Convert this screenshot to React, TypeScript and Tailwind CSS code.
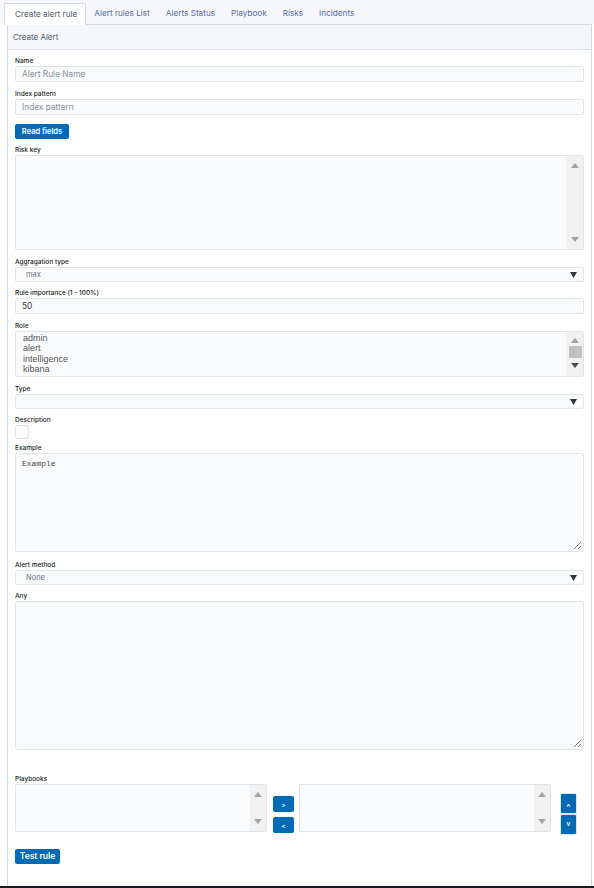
import type { ReactNode } from "react";

const tabs = ["Create alert rule", "Alert rules List", "Alerts Status", "Playbook", "Risks", "Incidents"];
const roles = ["admin", "alert", "intelligence", "kibana"];

const box = "rounded-[2px] border border-[#e1e4e9] bg-[#fafbfd]";

function Field({ label, className = "", children }: { label: string; className?: string; children: ReactNode }) {
  return (
    <div className={className}>
      <div className="h-[10px] text-[6.5px] font-medium leading-[10px] text-[#1a1c21]">{label}</div>
      {children}
    </div>
  );
}

function Arrow({ up, color }: { up?: boolean; color: string }) {
  return (
    <svg width="8" height="5" viewBox="0 0 8 5">
      <path d={up ? "M0 5 L4 0 L8 5 Z" : "M0 0 L8 0 L4 5 Z"} fill={color} />
    </svg>
  );
}

function Scrollbar() {
  return (
    <div className="flex w-[16px] shrink-0 flex-col items-center justify-between bg-[#f1f1f1] py-[7px]">
      <Arrow up color="#a3a3a3" />
      <Arrow color="#a3a3a3" />
    </div>
  );
}

function Select({ value }: { value?: string }) {
  return (
    <div className={`${box} flex h-[15px] items-center justify-between pl-[10px] pr-[6px]`}>
      <span className="text-[7.5px] text-[#69707d]">{value}</span>
      <svg width="7" height="6" viewBox="0 0 7 6">
        <path d="M0 0 H7 L3.5 6 Z" fill="#343741" />
      </svg>
    </div>
  );
}

function TextArea({ h, children }: { h: string; children?: ReactNode }) {
  return (
    <div className={`${box} relative ${h} px-[6px] py-[4px]`}>
      {children}
      <svg className="absolute bottom-[1px] right-[1px]" width="9" height="9" viewBox="0 0 9 9">
        <path d="M1 8 L8 1 M5 8 L8 5" stroke="#555" strokeWidth="0.8" />
      </svg>
    </div>
  );
}

function Input({ placeholder, value }: { placeholder?: string; value?: string }) {
  return (
    <input
      readOnly
      placeholder={placeholder}
      value={value ?? ""}
      className={`${box} block h-[16px] w-full px-[6px] text-[8.3px] text-[#343741] outline-none placeholder:text-[#8c919b]`}
    />
  );
}

function BlueButton({ children, className = "" }: { children: ReactNode; className?: string }) {
  return (
    <button className={`flex items-center justify-center rounded-[2px] bg-[#006bb4] font-semibold text-white ${className}`}>
      {children}
    </button>
  );
}

export default function App() {
  return (
    <div className="flex h-[888px] w-[594px] flex-col bg-white font-['Inter',sans-serif]">
      {/* tab strip */}
      <div className="flex h-[24px] shrink-0 items-end bg-[#f5f7fa] pl-[4px]">
        {tabs.map((t, i) =>
          i === 0 ? (
            <div
              key={t}
              className="relative z-10 -mb-px flex h-[22px] items-center border border-b-0 border-[#d3dae6] bg-white pl-[10px] pr-[8px] text-[8.2px] text-[#535966]"
            >
              {t}
            </div>
          ) : (
            <div key={t} className="flex h-[21px] items-center px-[8px] text-[8.2px] text-[#5b6c9d]">
              {t}
            </div>
          ),
        )}
      </div>

      <div className="ml-[7px] flex w-[585px] flex-1 flex-col border-x border-t border-[#d3dae6]">
        <div className="flex h-[25px] items-center border-b border-[#d3dae6] bg-[#f5f7fa] pl-[5px] text-[8px] text-[#535966]">
          Create Alert
        </div>

        <div className="flex flex-col px-[7px] pt-[6px]">
          <Field label="Name">
            <Input placeholder="Alert Rule Name" />
          </Field>
          <Field label="Index pattern" className="mt-[7px]">
            <Input placeholder="Index pattern" />
          </Field>
          <div className="mt-[9px]">
            <BlueButton className="h-[15px] w-[54px] text-[7.5px]">Read fields</BlueButton>
          </div>

          <Field label="Risk key" className="mt-[6px]">
            <div className={`${box} flex h-[95px] justify-end`}>
              <Scrollbar />
            </div>
          </Field>

          <Field label="Aggragation type" className="mt-[7px]">
            <Select value="max" />
          </Field>
          <Field label="Rule importance (1 - 100%)" className="mt-[6px]">
            <Input value="50" />
          </Field>

          <Field label="Role" className="mt-[7px]">
            <div className={`${box} flex h-[46px]`}>
              <div className="flex-1 pl-[7px] pt-[1px] font-['Liberation_Sans',sans-serif] text-[9px] leading-[10.4px] text-[#555]">
                {roles.map((r) => (
                  <div key={r}>{r}</div>
                ))}
              </div>
              <div className="flex w-[16px] flex-col items-center bg-[#f1f1f1] pt-[6px]">
                <Arrow up color="#a3a3a3" />
                <div className="mt-[3px] h-[12px] w-[13px] bg-[#c1c1c1]" />
                <div className="mt-[5px]">
                  <Arrow color="#505050" />
                </div>
              </div>
            </div>
          </Field>

          <Field label="Type" className="mt-[7px]">
            <Select />
          </Field>
          <Field label="Description" className="mt-[6px]">
            <div className={`${box} h-[14px] w-[14px]`} />
          </Field>
          <Field label="Example" className="mt-[4px]">
            <TextArea h="h-[99px]">
              <div className="font-['Liberation_Mono',monospace] text-[8px] text-[#444]">Example</div>
            </TextArea>
          </Field>

          <Field label="Alert method" className="mt-[8px]">
            <Select value="None" />
          </Field>
          <Field label="Any" className="mt-[6px]">
            <TextArea h="h-[149px]" />
          </Field>

          <Field label="Playbooks" className="mt-[24px]">
            <div className="flex items-start">
              <div className={`${box} flex h-[48px] w-[252px] justify-end`}>
                <Scrollbar />
              </div>
              <div className="ml-[6px] mt-[12px] flex flex-col gap-[5px]">
                <BlueButton className="h-[16px] w-[21px] text-[6px]">&gt;</BlueButton>
                <BlueButton className="h-[16px] w-[21px] text-[6px]">&lt;</BlueButton>
              </div>
              <div className={`${box} ml-[5px] flex h-[48px] w-[252px] justify-end`}>
                <Scrollbar />
              </div>
              <div className="ml-[9px] mt-[9px] flex flex-col">
                <BlueButton className="h-[21px] w-[17px] border border-[#d6e6f5] pt-[5px] text-[9px] leading-none">^</BlueButton>
                <BlueButton className="h-[21px] w-[17px] border border-[#d6e6f5] text-[6.5px]">v</BlueButton>
              </div>
            </div>
          </Field>

          <div className="mt-[14px]">
            <BlueButton className="h-[15px] w-[45px] text-[8.5px] font-medium">Test rule</BlueButton>
          </div>
        </div>
      </div>
      <div className="h-[2px] shrink-0 bg-[#1a1c21]" />
    </div>
  );
}
